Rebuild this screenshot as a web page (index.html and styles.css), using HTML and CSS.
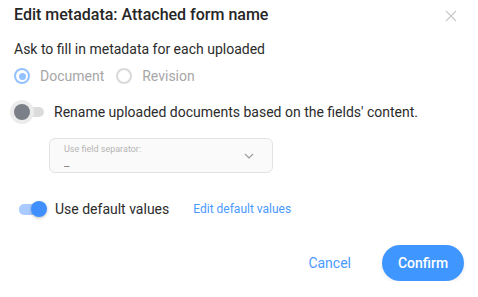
FILE: index.html
```html
<!DOCTYPE html>
<html lang="en">
<head>
  <meta charset="UTF-8">
  <title>Edit metadata</title>
  <link rel="stylesheet" href="styles.css">
</head>
<body>
  <div class="dialog">
    <div class="header">
      <h2 class="title">Edit metadata: Attached form name</h2>
      <span class="close">
        <svg width="12" height="12" viewBox="0 0 12 12"><path d="M1 1L11 11M11 1L1 11" stroke="#c8c8c8" stroke-width="1.1" fill="none"/></svg>
      </span>
    </div>

    <p class="ask">Ask to fill in metadata for each uploaded</p>

    <div class="radios">
      <label class="radio checked"><span class="dot"></span>Document</label>
      <label class="radio"><span class="dot"></span>Revision</label>
    </div>

    <div class="row rename">
      <span class="switch off"><span class="knob"></span></span>
      <span class="row-text">Rename uploaded documents based on the fields' content.</span>
    </div>

    <div class="select">
      <div class="select-value">
        <span class="select-label">Use field separator:</span>
        <span class="select-text">_</span>
      </div>
      <svg class="chevron" width="10" height="6" viewBox="0 0 10 6"><path d="M1 1L5 5L9 1" stroke="#9a9a9a" stroke-width="1.1" fill="none"/></svg>
    </div>

    <div class="row defaults">
      <span class="switch on"><span class="knob"></span></span>
      <span class="row-text">Use default values</span>
      <a href="#" class="link">Edit default values</a>
    </div>

    <div class="footer">
      <button class="btn-cancel">Cancel</button>
      <button class="btn-confirm">Confirm</button>
    </div>
  </div>
</body>
</html>
```

FILE: styles.css
```css
body {
  margin: 0;
  background: white;
  font-family: Roboto, 'Liberation Sans', sans-serif;
  color: #2b2b2b;
}
.dialog {
  padding: 5px 14px 0 14px;
}
.header {
  display: flex;
  justify-content: space-between;
  align-items: center;
  height: 20px;
}
.title {
  margin: 0;
  font-size: 16px;
  font-weight: 500;
  line-height: 20px;
  color: #262626;
}
.close {
  display: flex;
  margin-right: 7px;
  margin-top: 2px;
}
.ask {
  margin: 14px 0 0 0;
  font-size: 14px;
  line-height: 20px;
}
.radios {
  display: flex;
  margin-top: 7px;
  height: 20px;
  align-items: center;
}
.radio {
  display: flex;
  align-items: center;
  font-size: 14px;
  color: #a6a6a6;
  margin-right: 12px;
}
.radio .dot {
  flex-shrink: 0;
  width: 16px;
  height: 16px;
  box-sizing: border-box;
  border: 2px solid #d9d9d9;
  border-radius: 50%;
  margin-right: 10px;
  position: relative;
}
.radio.checked .dot {
  border-color: #93c2ff;
}
.radio.checked .dot::after {
  content: "";
  position: absolute;
  left: 2.5px;
  top: 2.5px;
  width: 7px;
  height: 7px;
  border-radius: 50%;
  background: #93c2ff;
}
.row {
  display: flex;
  align-items: center;
  height: 24px;
}
.rename {
  margin-top: 14px;
}
.row-text {
  font-size: 14px;
  line-height: 20px;
}
.switch {
  position: relative;
  height: 10px;
  border-radius: 5px;
}
.switch .knob {
  position: absolute;
  width: 16px;
  height: 16px;
  border-radius: 50%;
  top: -3px;
}
.switch.off {
  width: 28px;
  margin-left: 2px;
  margin-right: 10px;
  background: #dcdcdc;
}
.switch.off .knob {
  left: -2px;
  background: #7b8088;
  box-shadow: 0 0 0 4px #ececec;
}
.switch.on {
  width: 26px;
  height: 11px;
  margin-left: 5px;
  margin-right: 10px;
  background: #a9cbff;
}
.switch.on .knob {
  left: 12px;
  top: -2.5px;
  background: #3f8fff;
  box-shadow: 0 1px 3px rgba(0, 0, 0, 0.25);
}
.select {
  margin: 14px 0 0 35px;
  width: 224px;
  height: 35px;
  box-sizing: border-box;
  border: 1px solid #e3e3e3;
  border-radius: 6px;
  background: #fafafa;
  display: flex;
  align-items: center;
  justify-content: space-between;
  padding: 0 18px 0 14px;
}
.select-value {
  display: flex;
  flex-direction: column;
}
.select-label {
  font-size: 9px;
  line-height: 12px;
  color: #b5b5b5;
}
.select-text {
  font-size: 12px;
  line-height: 14px;
  color: #8a8a8a;
}
.chevron {
  margin-top: 1px;
}
.defaults {
  margin-top: 26px;
  height: 20px;
}
.link {
  margin-left: 24px;
  font-size: 12px;
  color: #4a9aff;
  text-decoration: none;
}
.footer {
  display: flex;
  justify-content: flex-end;
  align-items: center;
  margin-top: 26px;
}
.btn-cancel {
  border: none;
  background: none;
  font-family: inherit;
  font-size: 14px;
  color: #4a9aff;
  padding: 0;
  margin-right: 31px;
  cursor: pointer;
}
.btn-confirm {
  border: none;
  background: #4096ff;
  color: white;
  font-family: inherit;
  font-size: 14px;
  font-weight: 500;
  width: 82px;
  height: 36px;
  border-radius: 18px;
  box-shadow: 0 2px 4px rgba(0, 0, 0, 0.08);
  cursor: pointer;
}
```
